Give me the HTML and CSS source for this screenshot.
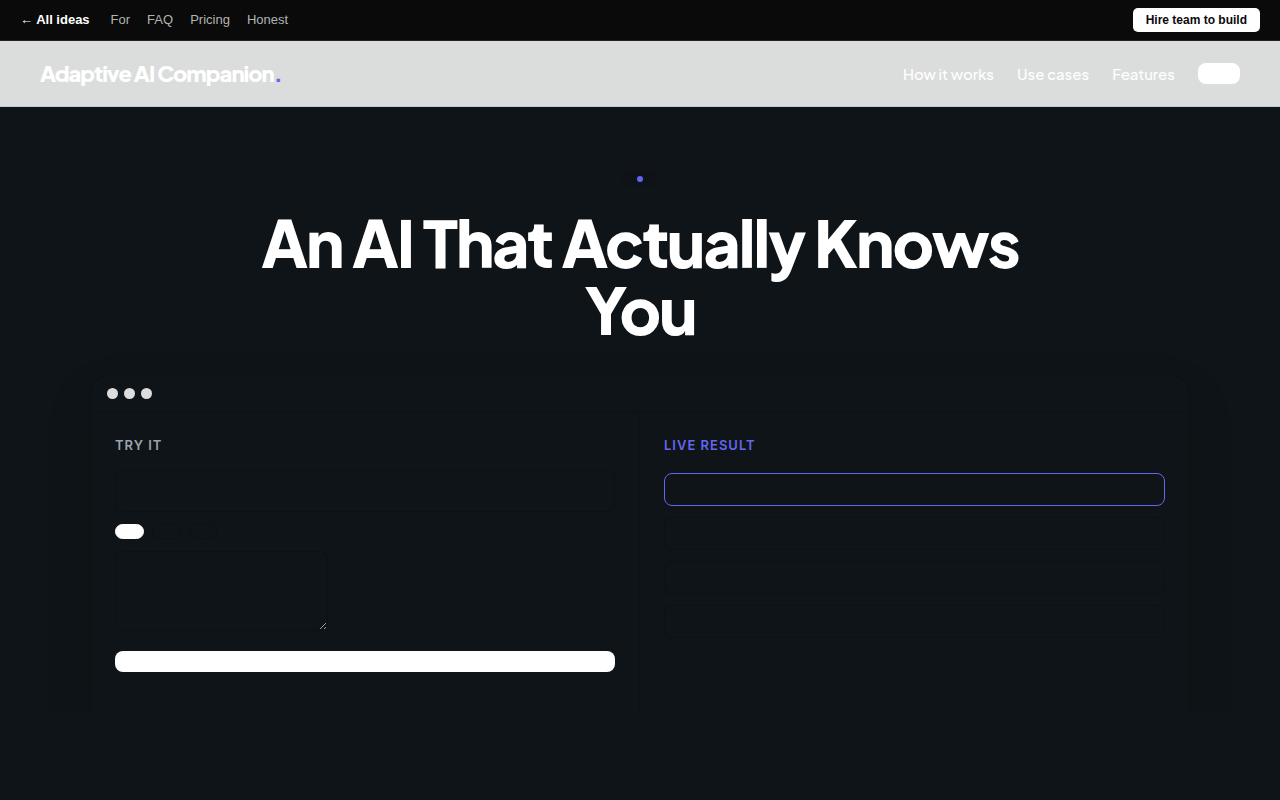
FILE: index.html
```
<!DOCTYPE html>
<html lang="en">
<head>
<meta charset="UTF-8">
<meta name="viewport" content="width=device-width, initial-scale=1.0">
<title>Adaptive AI Companion</title>
<link rel="stylesheet" href="styles.css">
</head>
<body>

<div class="topbar">
  <a class="back" href="#">← All ideas</a>
  <a href="#for">For</a>
  <a href="#faq">FAQ</a>
  <a href="#pricing">Pricing</a>
  <a href="#honest">Honest</a>
  <button class="hire" type="button">Hire team to build</button>
</div>

<header class="nav">
  <a class="logo" href="#">Adaptive AI Companion<span>.</span></a>
  <nav class="nav-links">
    <a href="#how">How it works</a>
    <a href="#cases">Use cases</a>
    <a href="#features">Features</a>
    <button class="nav-cta" type="button" aria-label="Get started"></button>
  </nav>
</header>

<main class="hero">
  <div class="pill"><span class="pill-dot"></span></div>
  <h1>An AI That Actually Knows You</h1>

  <div class="stage">
    <div class="card">
      <div class="card-bar">
        <span class="dot"></span>
        <span class="dot"></span>
        <span class="dot"></span>
      </div>
      <div class="card-body">
        <form class="panel panel-try" onsubmit="return false;">
          <h2 class="label">TRY IT</h2>
          <input class="field" type="text" aria-label="Name">
          <div class="chips">
            <button class="chip active" type="button" aria-label="Option 1"></button>
            <button class="chip" type="button" aria-label="Option 2"></button>
            <button class="chip" type="button" aria-label="Option 3"></button>
          </div>
          <textarea class="message" aria-label="Message"></textarea>
          <button class="run" type="submit" aria-label="Run"></button>
        </form>
        <section class="panel">
          <h2 class="label accent">LIVE RESULT</h2>
          <div class="results">
            <div class="result active"></div>
            <div class="result"></div>
            <div class="result"></div>
            <div class="result"></div>
          </div>
        </section>
      </div>
    </div>
  </div>
</main>

</body>
</html>
```
FILE: styles.css
```
* {
  box-sizing: border-box;
}
body {
  margin: 0;
  background-color: #0f1418;
  color: #fff;
  font-family: "Plus Jakarta Sans", Inter, sans-serif;
}
a {
  color: inherit;
  text-decoration: none;
}
button {
  border: 0;
  padding: 0;
  background-color: #fff;
  cursor: pointer;
}

/* Top bar */
.topbar {
  display: flex;
  align-items: center;
  gap: 17px;
  padding: 8px 20px;
  background-color: #0a0a0a;
  border-bottom: 1px solid #222;
  color: #b3b3b3;
  font-family: "Liberation Sans", Arial, sans-serif;
  font-size: 13px;
  line-height: 16px;
}
.topbar .back {
  margin-right: 4px;
  color: #fff;
  font-weight: bold;
}
.hire {
  margin-left: auto;
  padding: 4px 13px;
  border-radius: 5px;
  color: #0a0a0a;
  font-family: inherit;
  font-size: 12px;
  font-weight: bold;
  line-height: 16px;
}

/* Navigation */
.nav {
  display: flex;
  align-items: center;
  justify-content: space-between;
  padding: 18px 40px;
  background-color: #dbdddc;
  border-bottom: 1px solid #c6c9c9;
}
.logo {
  font-size: 22px;
  font-weight: 800;
  letter-spacing: -1px;
  line-height: 29px;
}
.logo span {
  color: #6366f1;
}
.nav-links {
  display: flex;
  align-items: center;
  gap: 23px;
  font-size: 15px;
  font-weight: 500;
  line-height: 19px;
}
.nav-cta {
  width: 42px;
  height: 21px;
  border-radius: 8px;
}

/* Hero */
.hero {
  padding-top: 64px;
}
.pill {
  width: fit-content;
  margin: 0 auto;
  padding: 5px 15px;
  border-radius: 20px;
  background-color: #0f1317;
}
.pill-dot {
  display: block;
  width: 6px;
  height: 6px;
  border-radius: 50%;
  background-color: #6366f1;
}
h1 {
  max-width: 860px;
  margin: 22px auto 0;
  font-size: 64px;
  font-weight: 800;
  letter-spacing: -2px;
  line-height: 67px;
  text-align: center;
}
.stage {
  overflow: hidden;
  padding: 32px 40px 0;
}
.card {
  max-width: 1100px;
  margin: 0 auto;
  border: 1px solid #0e1216;
  border-bottom: 0;
  border-radius: 20px 20px 0 0;
  box-shadow: 0 20px 50px rgba(10, 10, 10, 0.1);
}
.card-bar {
  display: flex;
  gap: 6px;
  padding: 12px 16px;
  border-bottom: 1px solid #0d1115;
}
.dot {
  width: 11px;
  height: 11px;
  border-radius: 50%;
  background-color: #ddd;
}
.card-body {
  display: grid;
  grid-template-columns: 1fr 1fr;
}
.panel {
  padding: 24px 24px 36px;
}
.panel-try {
  border-right: 1px solid #0d1115;
}
.label {
  margin: 0 0 16px;
  color: #9ca3af;
  font-family: Inter, sans-serif;
  font-size: 13px;
  font-weight: 600;
  letter-spacing: 1px;
  line-height: 18px;
}
.label.accent {
  color: #6366f1;
}
.field,
.message {
  display: block;
  border: 1px solid #0d1115;
  border-radius: 8px;
  background-color: transparent;
  color: #fff;
  font-family: inherit;
  font-size: 14px;
}
.field {
  width: 100%;
  padding: 11px 12px;
  line-height: 18px;
}
.chips {
  display: flex;
  gap: 8px;
  margin: 12px 0;
}
.chip {
  width: 29px;
  height: 15px;
  border: 1px solid #0d1115;
  border-radius: 16px;
  background-color: transparent;
}
.chip.active {
  border-color: #fff;
  background-color: #fff;
}
.message {
  width: 213px;
  height: 80px;
  padding: 12px;
}
.run {
  width: 100%;
  height: 21px;
  margin-top: 20px;
  border-radius: 8px;
}
.results {
  display: grid;
  gap: 11px;
  padding-top: 3px;
}
.result {
  height: 33px;
  border: 1px solid #0d1115;
  border-radius: 8px;
}
.result.active {
  border-color: #6366f1;
}
```
